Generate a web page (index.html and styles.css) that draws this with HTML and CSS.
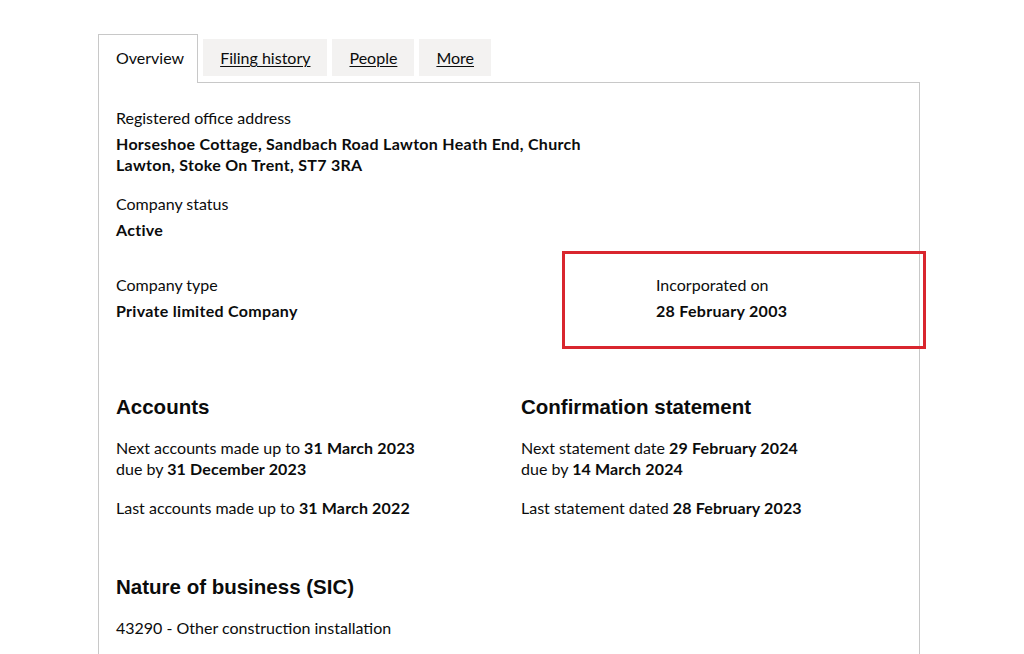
FILE: index.html
```html
<!DOCTYPE html>
<html lang="en">
<head>
<meta charset="utf-8">
<title>Company overview</title>
<link rel="stylesheet" href="styles.css">
</head>
<body>
<div class="page">
  <ul class="tabs">
    <li class="tab tab-active">Overview</li>
    <li class="tab"><a href="#">Filing history</a></li>
    <li class="tab"><a href="#">People</a></li>
    <li class="tab"><a href="#">More</a></li>
  </ul>
  <div class="panel">
    <div class="row two-thirds">
      <dl class="item">
        <dt>Registered office address</dt>
        <dd class="addr">Horseshoe Cottage, Sandbach Road Lawton Heath End, Church Lawton, Stoke On Trent, ST7 3RA</dd>
        <dt>Company status</dt>
        <dd>Active</dd>
      </dl>
    </div>
    <div class="row two-thirds row-type">
      <dl class="item">
        <dt>Company type</dt>
        <dd>Private limited Company</dd>
      </dl>
      <dl class="item">
        <dt>Incorporated on</dt>
        <dd>28 February 2003</dd>
      </dl>
    </div>
    <div class="row halves row-acc">
      <div class="item">
        <h2>Accounts</h2>
        <p>Next accounts made up to <b>31 March 2023</b><br>due by <b>31 December 2023</b></p>
        <p>Last accounts made up to <b>31 March 2022</b></p>
      </div>
      <div class="item">
        <h2>Confirmation statement</h2>
        <p>Next statement date <b>29 February 2024</b><br>due by <b>14 March 2024</b></p>
        <p>Last statement dated <b>28 February 2023</b></p>
      </div>
    </div>
    <div class="sic">
      <h2>Nature of business (SIC)</h2>
      <p>43290 - Other construction installation</p>
    </div>
    <div class="highlight"></div>
  </div>
</div>
</body>
</html>
```
FILE: styles.css
```css
html, body {
  margin: 0;
  padding: 0;
  background: #ffffff;
}
body {
  font-family: "Lato", "Liberation Sans", sans-serif;
  font-size: 16px;
  line-height: 21px;
  color: #0b0c0c;
}
.page {
  padding: 34px 0 0 98px;
  width: 822px;
}
.tabs {
  list-style: none;
  margin: 0;
  padding: 0;
  display: flex;
  align-items: flex-start;
  gap: 5px;
  position: relative;
  z-index: 1;
  margin-bottom: -1px;
}
.tab {
  background: #f3f2f1;
  padding: 8px 17px;
  margin-top: 5px;
  line-height: 21px;
}
.tab a {
  color: #0b0c0c;
  text-decoration: underline;
  text-underline-offset: 2px;
}
.tab-active {
  background: #ffffff;
  border: 1px solid #c8c8c8;
  border-bottom: none;
  margin-top: 0;
  padding: 12px 13px 15px 17px;
}
.panel {
  position: relative;
  border: 1px solid #c8c8c8;
  border-bottom: none;
  padding: 24px 23px 40px 17px;
  width: 780px;
}
.row {
  display: grid;
  column-gap: 30px;
}
.two-thirds {
  grid-template-columns: 510px 240px;
}
.halves {
  grid-template-columns: 375px 375px;
}
dl, dd, dt, p, h2 {
  margin: 0;
}
dt {
  margin-bottom: 5px;
}
dd {
  font-weight: 700;
  letter-spacing: 0.3px;
  margin-bottom: 18px;
}
.row-type {
  margin-top: 16px;
}
.row-acc {
  margin-top: 55px;
}
h2 {
  font-family: "Liberation Sans", Arial, sans-serif;
  font-size: 20.5px;
  line-height: 25px;
  font-weight: 700;
  margin-bottom: 18px;
}
p {
  margin-bottom: 18px;
}
b {
  font-weight: 700;
  letter-spacing: 0.15px;
}
.sic {
  margin-top: 38px;
}
.highlight {
  position: absolute;
  left: 463px;
  top: 168px;
  width: 358px;
  height: 92px;
  border: 3px solid #d9262e;
}
```
